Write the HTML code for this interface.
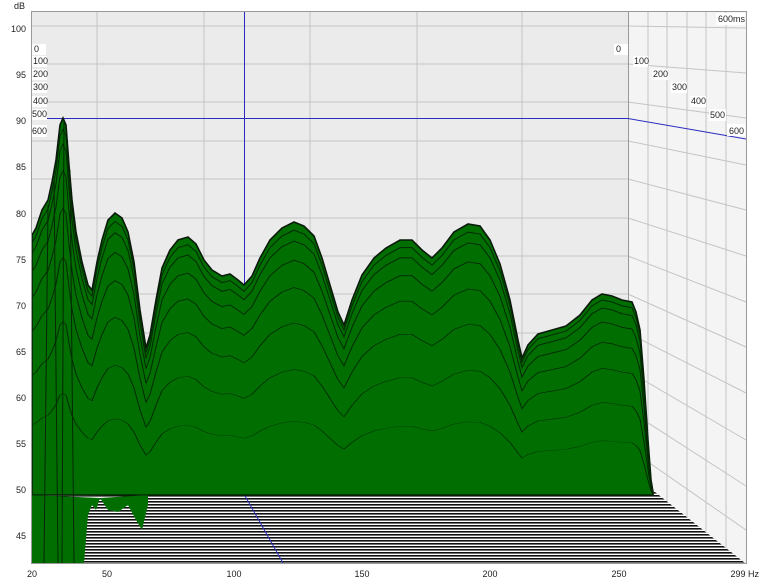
<!DOCTYPE html>
<html><head><meta charset="utf-8"><style>
html,body{margin:0;padding:0;background:#fff;width:760px;height:581px;overflow:hidden}
svg{display:block}
text{font-family:"Liberation Sans",sans-serif;font-size:9px;fill:#222}
</style></head><body>
<svg width="760" height="581" viewBox="0 0 760 581">
<defs>
<pattern id="st" width="4" height="3" patternUnits="userSpaceOnUse">
<rect width="4" height="3" fill="#fff"/><rect width="4" height="1.6" fill="#111"/>
</pattern>
<path id="env" d="M32,235 L36,228 42,210 48,200 52,182 56,160 60,125 63,118 66,125 69,165 72,200 76,232 82,262 88,285 92,290 97,262 102,240 108,220 115,213 122,218 128,232 134,262 140,310 146,348 150,335 156,300 162,268 170,250 178,240 188,237 196,244 204,260 212,270 222,276 230,274 238,280 244,285 252,276 260,258 270,240 282,228 294,222 304,226 314,236 322,258 330,285 338,312 344,325 352,300 362,275 374,258 386,248 400,240 412,240 422,250 432,258 442,248 454,232 468,224 480,226 490,240 500,264 510,300 518,340 522,358 528,345 538,334 552,330 566,326 580,315 592,300 602,294 612,296 622,300 632,302 636,312 640,330 644,380 648,440 651,480 653,492 L653,495 L32,495 Z"/>
</defs>
<rect x="31" y="11" width="716" height="553" fill="#ddd"/>
<rect x="32" y="12" width="596" height="484" fill="#ebebeb"/>
<polygon points="628,12 746,12 746,563 628,496" fill="#f4f4f4"/>
<g stroke="#c4c4c4" stroke-width="1" fill="none">
<path d="M32,26H628M32,64H628M32,102H628M32,141H628M32,179H628M32,218H628M32,256H628M32,294H628M32,333H628M32,371H628M32,410H628M32,448H628M32,486H628"/>
<path d="M97,12V496M204,12V496M310,12V496M417,12V496M522,12V496"/>
<path d="M648,12V507M667,12V518M687,12V529M706,12V540M726,12V552"/>
<path d="M628,26L746,28M628,64L746,73M628,102L746,118M628,141L746,165M628,179L746,210M628,218L746,256M628,256L746,302M628,294L746,347M628,333L746,393M628,371L746,440M628,410L746,486M628,448L746,530"/>
</g>
<rect x="628" y="12" width="1" height="484" fill="#999"/>
<polygon points="32,496 655,492 745,563 32,563" fill="url(#st)"/>
<path d="M32,118.5H628L746,139M244.5,12V495L283,563" stroke="#2b2bc0" stroke-width="1" fill="none"/>
<use href="#env" fill="#006e00" stroke="#0a1a0a" stroke-width="1.6"/>
<path d="M32,495 L32,563 L84,563 L88,515 92,505 96,510 100,498 L32,495 Z" fill="#006e00"/>
<path d="M100,498 L108,510 118,512 128,505 136,520 142,530 148,505 L148,495 Z" fill="#006e00"/>
<g fill="none" stroke="#042804" stroke-width="1">
<use href="#env" transform="translate(0,495) scale(1,0.97) translate(0,-495)"/>
<use href="#env" transform="translate(0,495) scale(1,0.93) translate(0,-495)"/>
<use href="#env" transform="translate(0,495) scale(1,0.86) translate(0,-495)"/>
<use href="#env" transform="translate(0,495) scale(1,0.76) translate(0,-495)"/>
<use href="#env" transform="translate(0,495) scale(1,0.63) translate(0,-495)"/>
<use href="#env" transform="translate(0,495) scale(1,0.46) translate(0,-495)"/>
<use href="#env" transform="translate(0,495) scale(1,0.27) translate(0,-495)"/>
</g>
<path d="M54,180 L58,563 M64,120 L62,563 M48,205 L44,563 M70,170 L74,563" stroke="#062806" stroke-width="1" fill="none"/>
<rect x="31.5" y="11.5" width="715" height="552" fill="none" stroke="#999"/>
<text x="14" y="9" font-size="9">dB</text>
<g text-anchor="end">
<text x="26" y="32">100</text><text x="26" y="78">95</text><text x="26" y="124">90</text><text x="26" y="170">85</text><text x="26" y="217">80</text><text x="26" y="263">75</text><text x="26" y="309">70</text><text x="26" y="355">65</text><text x="26" y="401">60</text><text x="26" y="447">55</text><text x="26" y="493">50</text><text x="26" y="539">45</text>
</g>
<g text-anchor="middle">
<text x="32" y="577">20</text><text x="107" y="577">50</text><text x="234" y="577">100</text><text x="362" y="577">150</text><text x="490" y="577">200</text><text x="619" y="577">250</text>
</g>
<text x="759" y="577" text-anchor="end">299 Hz</text>
<g font-size="8">
<rect x="32" y="44" width="14" height="11" fill="#fff"/><text x="34" y="52">0</text>
<rect x="32" y="56" width="15" height="11" fill="#fff"/><text x="33" y="64" font-size="7">100</text>
<rect x="32" y="69" width="15" height="11" fill="#fff"/><text x="33" y="77">200</text>
<rect x="32" y="82" width="15" height="11" fill="#fff"/><text x="33" y="90">300</text>
<rect x="32" y="96" width="15" height="11" fill="#fff"/><text x="33" y="104">400</text>
<rect x="32" y="109" width="15" height="11" fill="#fff"/><text x="32" y="117">500</text>
<rect x="32" y="125" width="15" height="12" fill="#fff"/><text x="32" y="134">600</text>
<rect x="614" y="44" width="14" height="11" fill="#fff"/><text x="616" y="52">0</text>
<rect x="633" y="56" width="15" height="11" fill="#fff"/><text x="634" y="64" font-size="7">100</text>
<rect x="652" y="69" width="16" height="11" fill="#fff"/><text x="653" y="77">200</text>
<rect x="671" y="82" width="16" height="11" fill="#fff"/><text x="672" y="90">300</text>
<rect x="690" y="96" width="16" height="11" fill="#fff"/><text x="691" y="104">400</text>
<rect x="709" y="109" width="17" height="12" fill="#fff"/><text x="710" y="118">500</text>
<rect x="727" y="124" width="18" height="12" fill="#fff"/><text x="729" y="134">600</text>
<rect x="716" y="13" width="29" height="12" fill="#fff"/><text x="718" y="22">600ms</text>
</g>
</svg>
</body></html>
